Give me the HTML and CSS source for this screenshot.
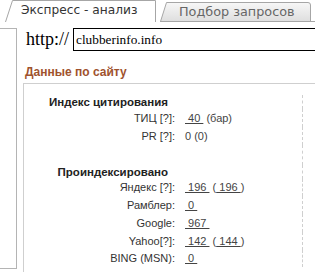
FILE: index.html
```html
<!DOCTYPE html>
<html lang="ru">
<head>
    <meta charset="UTF-8">
    <title>Экспресс - анализ</title>
    <link rel="stylesheet" href="styles.css">
</head>
<body>
    <div class="tabs">
        <div class="tab tab-active">
            <svg class="tab-shape" width="152" height="22" viewBox="0 0 152 22">
                <path d="M0.5 22 L7.5 0.5 L150.5 0.5 L150.5 22" fill="#fff" stroke="#a6a6a6"/>
            </svg>
            <span class="tab-label">Экспресс - анализ</span>
        </div>
        <div class="tab tab-idle">
            <svg class="tab-shape" width="155" height="22" viewBox="0 0 155 22">
                <defs>
                    <linearGradient id="idleFill" x1="0" y1="0" x2="0" y2="1">
                        <stop offset="0" stop-color="#f7f7f7"/>
                        <stop offset="1" stop-color="#dedede"/>
                    </linearGradient>
                </defs>
                <path d="M0.5 21.5 L6.5 2.5 L148 2.5 Q150.5 2.5 150.5 5 L150.5 21.5 Z" fill="url(#idleFill)" stroke="#a6a6a6"/>
                <path d="M0 21.5 H155" stroke="#a6a6a6"/>
            </svg>
            <span class="tab-label">Подбор запросов</span>
        </div>
    </div>

    <div class="page">
        <div class="side"></div>

        <div class="content">
            <div class="url-row">
                <span class="url-prefix">http://</span>
                <input class="url-input" type="text" value="clubberinfo.info">
            </div>

            <h2 class="section-title">Данные по сайту</h2>

            <!-- Site stats -->
            <div class="stats">
                <table class="stats-table">
                    <tr class="group">
                        <td class="label">Индекс цитирования</td>
                        <td class="value"></td>
                    </tr>
                    <tr class="item">
                        <td class="label">ТИЦ [?]:</td>
                        <td class="value"><a>&nbsp;40&nbsp;</a> (бар)</td>
                    </tr>
                    <tr class="item">
                        <td class="label">PR [?]:</td>
                        <td class="value">0 (0)</td>
                    </tr>
                    <tr class="gap">
                        <td class="label"></td>
                        <td class="value"></td>
                    </tr>
                    <tr class="group">
                        <td class="label">Проиндексировано</td>
                        <td class="value"></td>
                    </tr>
                    <tr class="item">
                        <td class="label">Яндекс [?]:</td>
                        <td class="value"><a>&nbsp;196&nbsp;</a> (<a>&nbsp;196&nbsp;</a>)</td>
                    </tr>
                    <tr class="item">
                        <td class="label">Рамблер:</td>
                        <td class="value"><a>&nbsp;0&nbsp;</a></td>
                    </tr>
                    <tr class="item">
                        <td class="label">Google:</td>
                        <td class="value"><a>&nbsp;967&nbsp;</a></td>
                    </tr>
                    <tr class="item">
                        <td class="label">Yahoo[?]:</td>
                        <td class="value"><a>&nbsp;142&nbsp;</a> (<a>&nbsp;144&nbsp;</a>)</td>
                    </tr>
                    <tr class="item">
                        <td class="label">BING (MSN):</td>
                        <td class="value"><a>&nbsp;0&nbsp;</a></td>
                    </tr>
                </table>
            </div>
        </div>
    </div>
</body>
</html>
```

FILE: styles.css
```css
/* General styles */
* {
    margin: 0;
    padding: 0;
    box-sizing: border-box;
}

html, body {
    overflow: hidden;
}

body {
    background: #fff;
    font-family: "Liberation Sans", Arial, sans-serif;
    color: #333;
    width: 315px;
    height: 272px;
}

/* Tabs */
.tabs {
    display: flex;
    height: 22px;
    padding-left: 5px;
}

.tab {
    position: relative;
    flex: none;
    height: 22px;
    font-family: "DejaVu Sans", Verdana, sans-serif;
    line-height: 21px;
    white-space: nowrap;
}

.tab-shape {
    position: absolute;
    left: 0;
    top: 0;
    display: block;
}

.tab-label {
    position: relative;
}

.tab-active {
    width: 152px;
    padding-left: 16px;
    font-size: 12.2px;
    color: #333;
}

.tab-idle {
    width: 155px;
    margin-left: 3px;
    padding-left: 19px;
    font-size: 12.8px;
    color: #666;
    line-height: 24px;
}

/* Main area */
.page {
    display: flex;
    margin-top: 6px;
}

.side {
    flex: none;
    width: 17px;
    height: 241px;
    border: 1px solid #b4b4b4;
    border-left: none;
}

.content {
    flex: 1;
    min-width: 0;
    margin-left: 6px;
}

.url-row {
    display: flex;
    align-items: center;
    height: 23px;
    padding-left: 3px;
}

.url-prefix {
    font-family: "Liberation Serif", "Times New Roman", serif;
    font-size: 18px;
    color: #000;
}

.url-input {
    flex: 1;
    min-width: 0;
    height: 23px;
    margin-left: 4px;
    padding: 0 2px;
    border: 1px solid #000;
    border-right: none;
    font-family: "Liberation Serif", "Times New Roman", serif;
    font-size: 13.3px;
    color: #000;
    outline: none;
}

.section-title {
    margin: 14px 0 0 2px;
    font-size: 12px;
    line-height: 14px;
    font-weight: bold;
    color: #a0522d;
}

/* Stats box */
.stats {
    margin-top: 4px;
    height: 200px;
    padding-top: 11px;
    border-top: 1px solid #cfcfcf;
    border-left: 1px solid #cfcfcf;
}

.stats-table {
    width: 279px;
    border-collapse: collapse;
    border-right: 1px dashed #cfcfcf;
    font-size: 11px;
}

.stats-table td {
    padding: 0;
    white-space: nowrap;
    vertical-align: middle;
}

.stats-table .label {
    width: 151px;
    text-align: right;
    color: #333;
}

.stats-table .value {
    padding-left: 10px;
    color: #444;
}

.stats-table a {
    text-decoration: underline;
    color: #444;
}

.group td {
    height: 14px;
}

.group .label {
    padding-right: 7px;
    font-size: 11.5px;
    font-weight: bold;
    color: #222;
}

.item td {
    height: 17.75px;
}

.gap td {
    height: 20px;
}
```
